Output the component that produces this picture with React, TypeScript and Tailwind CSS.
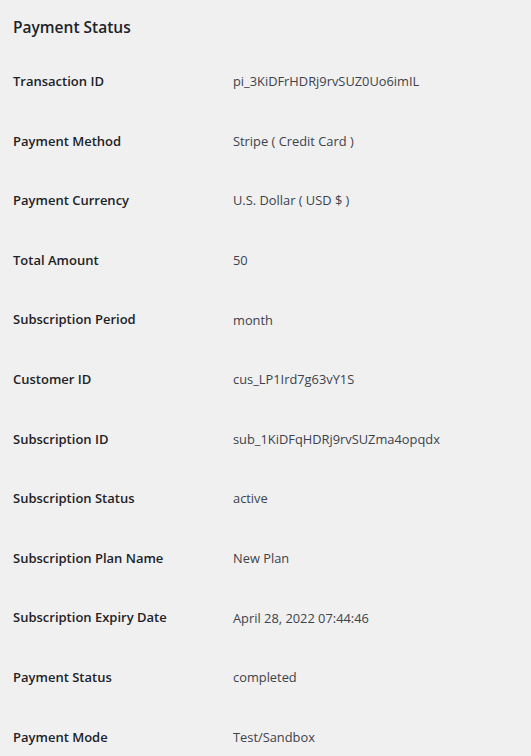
const ROWS: [string, string][] = [
  ["Transaction ID", "pi_3KiDFrHDRj9rvSUZ0Uo6imIL"],
  ["Payment Method", "Stripe ( Credit Card )"],
  ["Payment Currency", "U.S. Dollar ( USD $ )"],
  ["Total Amount", "50"],
  ["Subscription Period", "month"],
  ["Customer ID", "cus_LP1Ird7g63vY1S"],
  ["Subscription ID", "sub_1KiDFqHDRj9rvSUZma4opqdx"],
  ["Subscription Status", "active"],
  ["Subscription Plan Name", "New Plan"],
  ["Subscription Expiry Date", "April 28, 2022 07:44:46"],
  ["Payment Status", "completed"],
  ["Payment Mode", "Test/Sandbox"],
];

export default function App() {
  return (
    <div className="min-h-[756px] w-[531px] bg-[#f0f0f1] px-[13px] font-['Open_Sans',sans-serif] text-[#1d2327]">
      <h2 className="flex h-[52px] items-center pt-[4px] text-[15.5px] font-semibold">Payment Status</h2>
      <div className="flex flex-col">
        {ROWS.map(([label, value]) => (
          <div key={label} className="flex h-[59.6px] items-center text-[13px]">
            <div className="w-[220px] shrink-0 font-semibold">{label}</div>
            <div className="text-[12.85px] text-[#3c434a]">{value}</div>
          </div>
        ))}
      </div>
    </div>
  );
}
